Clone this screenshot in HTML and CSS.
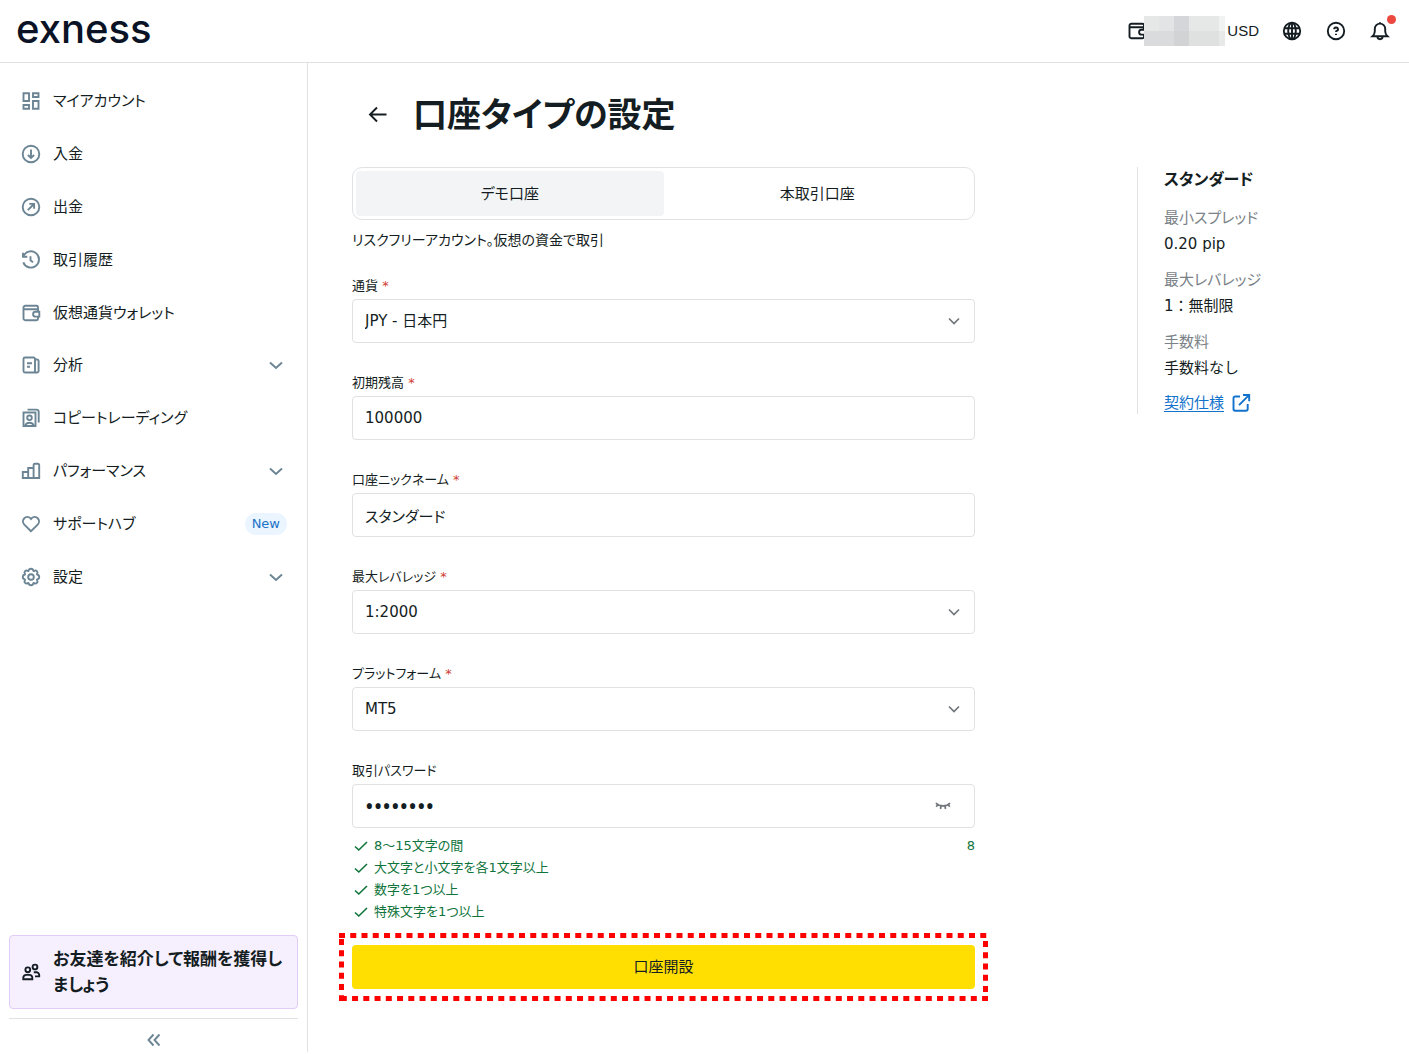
FILE: index.html
```html
<!DOCTYPE html>
<html lang="ja">
<head>
<meta charset="utf-8">
<meta name="viewport" content="width=device-width, initial-scale=1">
<title>口座タイプの設定</title>
<link rel="stylesheet" href="styles.css">
</head>
<body>
<header class="topbar">
  <a class="logo" href="#">exness</a>
  <div class="topbar-tools">
    <button class="balance" type="button" aria-label="USD">
      <svg class="icon wallet" viewBox="0 0 20 20"><path d="M17 7V4.2A1.4 1.4 0 0 0 15.600 2.800H4.200A1.700 1.700 0 0 0 2.500 4.500V15.500A1.700 1.700 0 0 0 4.200 17.200H15.600A1.400 1.400 0 0 0 17 15.800V14M2.500 6.300H15.600A1.400 1.400 0 0 1 17 7.700V8.500M18.300 8.800H14.500A2.400 2.400 0 0 0 14.500 13.600H18.300Z"/></svg>
      <svg class="mosaic" viewBox="0 0 81 30" shape-rendering="crispEdges">
        <rect width="81" height="15" fill="#e6e8e8"/><rect y="15" width="81" height="15" fill="#dadbdc"/>
        <rect x="15" width="15" height="15" fill="#e2e4e5"/><rect x="30" width="15" height="15" fill="#d4d6d9"/><rect x="75" width="6" height="15" fill="#f1f2f2"/>
        <rect x="30" y="15" width="15" height="15" fill="#d2d3d5"/><rect x="45" y="15" width="30" height="15" fill="#dfe0e0"/><rect x="75" y="15" width="6" height="15" fill="#e7e8e8"/>
      </svg>
      <span class="currency">USD</span>
    </button>
    <button class="tool" type="button" aria-label="Language">
      <svg class="icon" viewBox="0 0 20 20"><circle cx="10" cy="10" r="8.200"/><ellipse cx="10" cy="10" rx="3.800" ry="8.200"/><path d="M2.400 7.200H17.600M2.400 12.800H17.600M10 2V18"/></svg>
    </button>
    <button class="tool" type="button" aria-label="Help">
      <svg class="icon" viewBox="0 0 20 20"><circle cx="10" cy="10" r="8.200"/><path d="M8.200 8.300A1.900 1.700 0 1 1 10.500 9.900Q10 10.100 10 11M10 12.800V14"/></svg>
    </button>
    <button class="tool bell" type="button" aria-label="Notifications">
      <svg class="icon" viewBox="0 0 20 20"><path d="M10 1.300V2.500M2.500 15.200H17.500C15.700 13.600 15.200 12.300 15.200 10.300V7.800A5.200 5.200 0 0 0 4.800 7.800V10.300C4.800 12.300 4.300 13.600 2.500 15.200ZM7.400 15.300A2.600 2.900 0 0 0 12.600 15.300"/></svg>
    </button>
  </div>
</header>
<div class="shell">
  <aside class="sidebar">
    <nav>
      <ul class="menu">
        <li><a href="#"><svg class="icon" viewBox="0 0 20 20"><path d="M2.500 2.300H8V10H2.500ZM12 2.300H17.500V6H12ZM2.500 14H8V17.700H2.500ZM12 10H17.500V17.700H12Z"/></svg><span>マイアカウント</span></a></li>
        <li><a href="#"><svg class="icon" viewBox="0 0 20 20"><circle cx="10" cy="10" r="8.300"/><path d="M10 5.500V14M6.900 11L10 14L13.100 11"/></svg><span>入金</span></a></li>
        <li><a href="#"><svg class="icon" viewBox="0 0 20 20"><circle cx="10" cy="10" r="8.300"/><path d="M6.800 13.200L13 7M8.300 6.900H13.100V11.700"/></svg><span>出金</span></a></li>
        <li><a href="#"><svg class="icon" viewBox="0 0 20 20"><path d="M2 2.700V6.800H6.300M2.300 6.600A8.100 8.100 0 1 1 2.300 12.300M9.500 6.200V10.200L12 12.400"/></svg><span>取引履歴</span></a></li>
        <li><a href="#"><svg class="icon" viewBox="0 0 20 20"><path d="M17 7V4.200A1.400 1.400 0 0 0 15.600 2.800H4.200A1.700 1.700 0 0 0 2.500 4.500V15.500A1.700 1.700 0 0 0 4.200 17.200H15.600A1.400 1.400 0 0 0 17 15.800V14M2.500 6.300H15.600A1.400 1.400 0 0 1 17 7.700V8.500M18.300 8.800H14.500A2.400 2.400 0 0 0 14.500 13.600H18.300Z"/></svg><span>仮想通貨ウォレット</span></a></li>
        <li><a href="#"><svg class="icon" viewBox="0 0 20 20"><path d="M4 2.500H12.500A1.500 1.500 0 0 1 14 4V17.500H4A1.500 1.500 0 0 1 2.500 16V4A1.500 1.500 0 0 1 4 2.500ZM14 4.500H16A1.500 1.500 0 0 1 17.600 6V16A1.500 1.500 0 0 1 16 17.500H14M6 8.200H11M6 11.800H9"/></svg><span>分析</span><svg class="icon chevron" viewBox="0 0 22 22"><path d="M5 8.500L11 14L17 8.500"/></svg></a></li>
        <li><a href="#"><svg class="icon" viewBox="0 0 20 20"><path d="M2.500 4.500H14.500V18H2.500ZM6.500 1.600H15.500A2.200 2.200 0 0 1 17.700 3.800V14.500M4.500 17.500C5 13.800 12 13.800 12.500 17.500"/><circle cx="8.500" cy="9.800" r="2.300"/></svg><span>コピートレーディング</span></a></li>
        <li><a href="#"><svg class="icon" viewBox="0 0 20 20"><path d="M1.800 11H7.200V17H1.800ZM7.200 7H12.600V17H7.200ZM12.600 4A1.300 1.300 0 0 1 13.900 2.700H17A1.300 1.300 0 0 1 18.200 4V17H12.600Z"/></svg><span>パフォーマンス</span><svg class="icon chevron" viewBox="0 0 22 22"><path d="M5 8.500L11 14L17 8.500"/></svg></a></li>
        <li><a href="#"><svg class="icon" viewBox="0 0 20 20"><path d="M10 17.200L3.300 10.600C-0.800 6.400 5.400 0 9.300 4.200L10 5L10.700 4.200C14.600 0 20.800 6.400 16.700 10.600Z"/></svg><span>サポートハブ</span><span class="badge">New</span></a></li>
        <li><a href="#"><svg class="icon" viewBox="0 0 20 20"><path d="M7.700 3.600Q8 1.800 10 1.800Q12 1.800 12.300 3.600Q12.500 4.300 13.200 3.900Q14.700 2.900 15.900 4.100Q17.100 5.300 16.100 6.800Q15.700 7.500 16.400 7.700Q18.200 8 18.200 10Q18.200 12 16.400 12.300Q15.700 12.500 16.100 13.200Q17.100 14.700 15.900 15.900Q14.700 17.100 13.200 16.100Q12.500 15.700 12.300 16.400Q12 18.200 10 18.200Q8 18.200 7.700 16.400Q7.500 15.700 6.800 16.100Q5.300 17.100 4.100 15.900Q2.900 14.700 3.900 13.200Q4.300 12.500 3.600 12.300Q1.800 12 1.800 10Q1.800 8 3.600 7.700Q4.300 7.500 3.900 6.800Q2.900 5.300 4.100 4.100Q5.300 2.900 6.800 3.900Q7.500 4.300 7.700 3.600Z"/><circle cx="10" cy="10" r="2.800"/></svg><span>設定</span><svg class="icon chevron" viewBox="0 0 22 22"><path d="M5 8.500L11 14L17 8.500"/></svg></a></li>
      </ul>
    </nav>
    <div class="sidebar-foot">
      <a class="promo" href="#">
        <svg class="icon" viewBox="0 0 20 20"><circle cx="6.800" cy="7.800" r="2.400"/><path d="M2.300 17.200V15.700A2.800 2.800 0 0 1 5.100 12.900H8.500A2.800 2.800 0 0 1 11.300 15.700V17.200Z"/><circle cx="14" cy="5" r="2.400"/><path d="M12.800 10.300H15.500A2.700 2.700 0 0 1 18.200 13V14.400H14"/></svg>
        <span>お友達を紹介して報酬を獲得しましょう</span>
      </a>
      <button class="collapse" type="button" aria-label="Collapse"><svg class="icon" viewBox="0 0 16 16"><path d="M7.500 2.500L2.500 8L7.500 13.500M13.500 2.500L8.500 8L13.500 13.500"/></svg></button>
    </div>
  </aside>
  <main class="main">
    <div class="title-row">
      <button class="back" type="button" aria-label="Back"><svg class="icon" viewBox="0 0 20 20"><path d="M18.500 9.500H2.500M9 2.500L2 9.500L9 16.500"/></svg></button>
      <h1>口座タイプの設定</h1>
    </div>
    <div class="columns">
      <form class="form">
        <div class="tabs">
          <button class="tab active" type="button" aria-pressed="true">デモ口座</button>
          <button class="tab" type="button" aria-pressed="false">本取引口座</button>
        </div>
        <p class="hint">リスクフリーアカウント。仮想の資金で取引</p>
        <div class="fields">
          <div class="field">
            <label for="currency">通貨 <span class="req">*</span></label>
            <div class="control"><select id="currency"><option>JPY - 日本円</option></select><svg class="icon caret" viewBox="0 0 16 16"><path d="M3 5.500L8 10.500L13 5.500"/></svg></div>
          </div>
          <div class="field">
            <label for="deposit">初期残高 <span class="req">*</span></label>
            <div class="control"><input id="deposit" type="text" value="100000"></div>
          </div>
          <div class="field">
            <label for="nickname">口座ニックネーム <span class="req">*</span></label>
            <div class="control"><input id="nickname" type="text" value="スタンダード"></div>
          </div>
          <div class="field">
            <label for="leverage">最大レバレッジ <span class="req">*</span></label>
            <div class="control"><select id="leverage"><option>1:2000</option></select><svg class="icon caret" viewBox="0 0 16 16"><path d="M3 5.500L8 10.500L13 5.500"/></svg></div>
          </div>
          <div class="field">
            <label for="platform">プラットフォーム <span class="req">*</span></label>
            <div class="control"><select id="platform"><option>MT5</option></select><svg class="icon caret" viewBox="0 0 16 16"><path d="M3 5.500L8 10.500L13 5.500"/></svg></div>
          </div>
          <div class="field">
            <label for="password">取引パスワード</label>
            <div class="control"><input id="password" class="secret" type="password" value="Abcd123!"><button class="reveal" type="button" aria-label="Show password"><svg class="icon" viewBox="0 0 16 16"><path d="M1 5C4 8.800 12 8.800 15 5M2.800 6.800L1.200 8.800M6 8L5.500 11M10 8L10.500 11M13.200 6.800L14.800 8.800"/></svg></button></div>
          </div>
        </div>
        <ul class="rules">
          <li><svg class="icon" viewBox="0 0 18 18"><path d="M3 9.500L6.800 13L15 5"/></svg><span>8～15文字の間</span><span class="count">8</span></li>
          <li><svg class="icon" viewBox="0 0 18 18"><path d="M3 9.500L6.800 13L15 5"/></svg><span>大文字と小文字を各1文字以上</span></li>
          <li><svg class="icon" viewBox="0 0 18 18"><path d="M3 9.500L6.800 13L15 5"/></svg><span>数字を1つ以上</span></li>
          <li><svg class="icon" viewBox="0 0 18 18"><path d="M3 9.500L6.800 13L15 5"/></svg><span>特殊文字を1つ以上</span></li>
        </ul>
        <div class="submit-wrap">
          <button class="submit" type="button">口座開設</button>
          <svg class="marker" viewBox="0 0 649 68" preserveAspectRatio="none" aria-hidden="true"><path d="M0 2.500H649M1.800 65.500H649" stroke-dasharray="6 5.250"/><path d="M2.500 6V68M646.500 8V68" stroke-dasharray="6 5.250"/></svg>
        </div>
      </form>
      <section class="summary">
        <h2>スタンダード</h2>
        <dl>
          <div><dt>最小スプレッド</dt><dd>0.20 pip</dd></div>
          <div><dt>最大レバレッジ</dt><dd>1：無制限</dd></div>
          <div><dt>手数料</dt><dd>手数料なし</dd></div>
        </dl>
        <a class="spec" href="#"><span>契約仕様</span><svg class="icon" viewBox="0 0 20 20"><path d="M9 3.500H4.200A1.700 1.700 0 0 0 2.500 5.200V16A1.700 1.700 0 0 0 4.200 17.700H15A1.700 1.700 0 0 0 16.700 16V11M12 2H18.200V8.200M18 2.200L8 12.200"/></svg></a>
      </section>
    </div>
  </main>
</div>
</body>
</html>
```
FILE: styles.css
```css
* {
  box-sizing: border-box;
}

body {
  margin: 0;
  min-height: 100vh;
  padding-bottom: 2px;
  display: flex;
  flex-direction: column;
  background: #fff;
  color: #141d22;
  font-family: "DejaVu Sans", "Noto Sans CJK JP", sans-serif;
  font-size: 15px;
  line-height: 26px;
  font-feature-settings: "palt";
}

a {
  color: inherit;
  text-decoration: none;
}

ul,
dl,
dd,
h1,
h2,
p {
  margin: 0;
  padding: 0;
  list-style: none;
}

button,
input,
select {
  margin: 0;
  padding: 0;
  border: 0;
  background: none;
  color: inherit;
  font: inherit;
  font-feature-settings: inherit;
}

.icon {
  flex: none;
  display: block;
  width: 20px;
  height: 20px;
  fill: none;
  stroke: currentColor;
  stroke-width: 1.9;
}

/* Top bar */
.topbar {
  display: flex;
  align-items: center;
  justify-content: space-between;
  height: 63px;
  padding: 0 19px 0 16px;
  border-bottom: 1px solid #dfe1e2;
}

.logo {
  color: #0a1226;
  font-family: Inter, sans-serif;
  font-size: 40px;
  font-weight: 500;
  line-height: 48px;
  padding-bottom: 4px;
}

.topbar-tools {
  display: flex;
  align-items: center;
  gap: 24px;
}

.balance {
  display: flex;
  align-items: center;
  margin-right: -1px;
}

.wallet {
  margin-right: -3px;
}

.mosaic {
  position: relative;
  width: 81px;
  height: 30px;
}

.currency {
  padding-left: 2px;
  font-family: "Liberation Sans", sans-serif;
}

.bell {
  position: relative;
}

.bell::after {
  content: "";
  position: absolute;
  top: -6px;
  right: -6px;
  width: 9px;
  height: 9px;
  border-radius: 50%;
  background: #eb483f;
}

/* Sidebar */
.shell {
  flex: 1;
  display: flex;
}

.sidebar {
  flex: none;
  width: 308px;
  padding: 12px 9px 0;
  display: flex;
  flex-direction: column;
  justify-content: space-between;
  border-right: 1px solid #dfe1e2;
}

.menu {
  display: grid;
  grid-auto-rows: 1fr;
  min-height: 528px;
}

.menu a {
  display: flex;
  align-items: center;
  gap: 12px;
  height: 100%;
  padding: 0 11px 0 12px;
}

.menu .icon,
.collapse {
  color: #6c8594;
}

.menu .chevron {
  width: 22px;
  height: 22px;
  margin-left: auto;
}

.badge {
  margin-left: auto;
  padding: 0 7px;
  border-radius: 11px;
  background: #ebf5ff;
  color: #1b72c8;
  font-size: 13px;
  line-height: 22px;
}

.promo {
  display: flex;
  align-items: center;
  gap: 12px;
  padding: 10px 11px;
  border: 1px solid #dfccf7;
  border-radius: 4px;
  background: #f6effe;
  font-size: 17px;
  font-weight: 700;
}

.collapse {
  display: flex;
  justify-content: center;
  width: 100%;
  margin-top: 9px;
  padding: 13px 0 4px;
  border-top: 1px solid #dfe1e2;
}

.collapse .icon {
  width: 16px;
  height: 16px;
}

/* Main column */
.main {
  flex: 1;
  min-width: 0;
  padding: 26px 44px 50px;
}

.title-row {
  display: flex;
  align-items: center;
  gap: 25px;
  padding-left: 16px;
  margin-bottom: 26px;
}

h1 {
  font-size: 34px;
  line-height: 52px;
}

.columns {
  display: grid;
  grid-template-columns: minmax(0, 623px) 228px;
  justify-content: space-between;
  align-items: start;
}

.tabs {
  display: grid;
  grid-template-columns: 1fr 1fr;
  padding: 3px;
  border: 1px solid #e0e2e3;
  border-radius: 10px;
}

.tab {
  height: 45px;
  border-radius: 4px;
}

.active {
  background: #f3f4f6;
}

.hint {
  margin: 7px 0 24px;
  font-size: 14px;
}

.fields {
  display: grid;
  gap: 31px;
}

.field {
  display: grid;
  gap: 4px;
}

.field label {
  font-size: 13px;
  line-height: 18px;
}

.req {
  color: #cf3a30;
}

.control {
  display: flex;
  align-items: center;
  height: 44px;
  padding-right: 12px;
  border: 1px solid #dfe1e2;
  border-radius: 4px;
}

.control input,
.control select {
  flex: 1;
  min-width: 0;
  height: 42px;
  padding-left: 12px;
  appearance: none;
  outline: none;
}

.control .secret {
  font-family: "Noto Sans", sans-serif;
  font-size: 23px;
}

.control .icon {
  width: 16px;
  height: 16px;
  color: #70767b;
  stroke-width: 1.7;
}

.reveal {
  margin-right: 11px;
}

.caret {
  pointer-events: none;
}

.rules {
  padding-top: 7px;
  color: #0f743b;
  font-size: 13px;
  line-height: 22px;
}

.rules li {
  display: flex;
  align-items: center;
  gap: 4px;
}

.rules .icon {
  width: 18px;
  height: 18px;
  stroke-width: 1.6;
}

.count {
  margin-left: auto;
}

.submit-wrap {
  position: relative;
  margin-top: 22px;
}

.submit {
  display: block;
  width: 100%;
  height: 44px;
  border-radius: 4px;
  background: #ffde02;
}

.marker {
  position: absolute;
  top: -12px;
  left: -13px;
  width: calc(100% + 26px);
  height: calc(100% + 24px);
  fill: none;
  stroke: #f00;
  stroke-width: 5;
  pointer-events: none;
}

/* Account summary */
.summary {
  padding-left: 26px;
  border-left: 1px solid #dfe1e2;
}

.summary h2 {
  margin-bottom: 12px;
  font-size: 16px;
  line-height: 26px;
}

.summary dl {
  display: grid;
  gap: 10px;
}

.summary dt {
  color: #7b8287;
}

.summary dd {
  font-feature-settings: normal;
}

.spec {
  display: flex;
  align-items: center;
  gap: 7px;
  margin-top: 11px;
  color: #1272cc;
  line-height: 22px;
}

.spec span {
  text-decoration: underline;
  text-underline-offset: 3px;
}
```
